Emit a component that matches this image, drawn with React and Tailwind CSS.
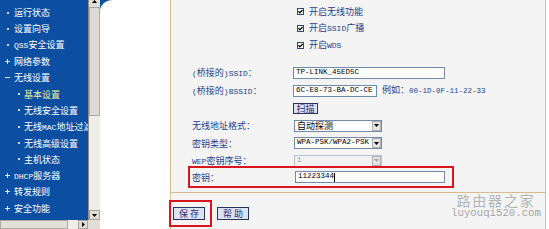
import React from "react";

// SimSun-style half-width latin inside CJK text
function H({ children }) {
  return (
    <span className="font-['Liberation_Mono',monospace] text-[8px]">
      {children}
    </span>
  );
}

// latin text inside input boxes and selects
function M({ children }) {
  return (
    <span className="font-['Liberation_Mono',monospace] text-[7.5px]">
      {children}
    </span>
  );
}

const MENU = [
  { text: "运行状态", mark: "dot" },
  { text: "设置向导", mark: "dot" },
  { text: <><H>QSS</H>安全设置</>, mark: "dot" },
  { text: "网络参数", mark: "plus" },
  { text: "无线设置", mark: "minus" },
  { text: "基本设置", mark: "dot", sub: true, active: true },
  { text: "无线安全设置", mark: "dot", sub: true },
  { text: <>无线<H>MAC</H>地址过滤</>, mark: "dot", sub: true },
  { text: "无线高级设置", mark: "dot", sub: true },
  { text: "主机状态", mark: "dot", sub: true },
  { text: <><H>DHCP</H>服务器</>, mark: "plus" },
  { text: "转发规则", mark: "plus" },
  { text: "安全功能", mark: "plus" },
  { text: "家长控制", mark: "dot" },
];

export default function App() {
  return (
    <div className="relative w-[549px] h-[229px] flex overflow-hidden bg-white font-['Noto_Sans_CJK_SC','Noto_Sans',sans-serif] text-[9px] leading-none">
      <div className="w-[100px] h-full flex flex-col">
        <div className="flex-1 min-h-0 flex">
          <Menu />
          <VScroll />
        </div>
        <HScroll />
      </div>

      <div className="flex-1 bg-[#0c4fa2]">
        <div className="h-full bg-white rounded-tl-[13px_11px] pl-[70px] flex">
          <Panel />
        </div>
      </div>

      <Watermark />
    </div>
  );
}

function Menu() {
  return (
    <nav className="w-[88px] h-full bg-[#0c4fa2] overflow-hidden pt-[4.5px]">
      {MENU.map((m, i) => (
        <div
          key={i}
          className={
            m.sub
              ? "h-[16.3px] flex items-center whitespace-nowrap pl-[16px]"
              : "h-[16.3px] flex items-center whitespace-nowrap pl-[5px]"
          }
        >
          <span className="w-[5px] h-[5px] flex items-center justify-center flex-shrink-0">
            <Mark type={m.mark} />
          </span>
          <span
            className={
              m.sub
                ? m.active
                  ? "ml-[3px] text-[#eef09a]"
                  : "ml-[3px] text-white"
                : "ml-[4px] text-white"
            }
          >
            {m.text}
          </span>
        </div>
      ))}
    </nav>
  );
}

function Mark({ type }) {
  if (type === "plus")
    return (
      <svg width="5" height="5" viewBox="0 0 5 5">
        <rect x="0" y="2" width="5" height="1" fill="#d9e6f7" />
        <rect x="2" y="0" width="1" height="5" fill="#d9e6f7" />
      </svg>
    );
  if (type === "minus")
    return (
      <svg width="5" height="5" viewBox="0 0 5 5">
        <rect x="0" y="2" width="5" height="1" fill="#d9e6f7" />
      </svg>
    );
  return <span className="w-[2px] h-[2px] bg-[#c9ddf5]" />;
}

function VScroll() {
  return (
    <div className="w-[12px] h-full flex flex-col bg-[#efede8] border-l border-[#8f8d86]">
      <div className="h-[8px] bg-[#e1ded6] border-b border-[#a9a69d] flex justify-center">
        <svg width="5" height="3" viewBox="0 0 5 3">
          <path d="M2.5 0L5 3H0Z" fill="#000" />
        </svg>
      </div>
      <div className="h-[108px] bg-[#dedbd3] border-x border-b border-[#aeaba2]" />
      <div className="flex-1" />
      <div className="h-[10px] bg-[#e1ded6] border border-[#a9a69d] flex items-center justify-center">
        <svg width="5" height="3" viewBox="0 0 5 3">
          <path d="M0 0H5L2.5 3Z" fill="#000" />
        </svg>
      </div>
    </div>
  );
}

function HScroll() {
  return (
    <div className="h-[9px] flex bg-[#efede8]">
      <div className="w-[68px] bg-[#e3e0d8] border border-[#aeaba2]" />
      <div className="w-[10px]" />
      <div className="w-[10px] bg-[#e1ded6] border border-[#a9a69d] flex items-center justify-center">
        <svg width="3" height="5" viewBox="0 0 3 5">
          <path d="M0 0L3 2.5L0 5Z" fill="#000" />
        </svg>
      </div>
      <div className="w-[12px] bg-[#e1ded6]" />
    </div>
  );
}

function Panel() {
  return (
    <div className="w-[376px] h-full flex flex-col bg-[#f4f4f4] border-x border-[#d8bb8e]">
      <div className="h-[193px] flex flex-col pt-[2.5px] border-b border-[#d8bb8e]">
        <Check>开启无线功能</Check>
        <Check>
          开启<H>SSID</H>广播
        </Check>
        <Check>
          开启<H>WDS</H>
        </Check>

        <div className="mt-[10.75px]" />

        <Row label={<><H>(</H>桥接的<H>)SSID</H>：</>}>
          <TextBox className="w-[152px]">TP-LINK_45ED5C</TextBox>
        </Row>
        <Row label={<><H>(</H>桥接的<H>)BSSID</H>：</>}>
          <TextBox className="w-[84px]">6C-E8-73-BA-DC-CE</TextBox>
          <span className="ml-[5px] text-[#213f90]">
            例如：<M>00-1D-0F-11-22-33</M>
          </span>
        </Row>
        <Row label="">
          <button className="w-[25px] h-[11px] flex items-center justify-center bg-[#dde2f3] border border-[#28335f] text-[#1d2d78]">
            扫描
          </button>
        </Row>
        <Row label="无线地址格式：">
          <Select>自动探测</Select>
        </Row>
        <Row label="密钥类型：">
          <Select>
            <M>WPA-PSK/WPA2-PSK</M>
          </Select>
        </Row>
        <Row label={<><H>WEP</H>密钥序号：</>}>
          <Select disabled>
            <M>1</M>
          </Select>
        </Row>

        <div className="-mt-[3.25px] ml-[17px] w-[266px] h-[22px] flex items-center pl-[2px] border-2 border-[#d8161e] whitespace-nowrap">
          <div className="w-[101px] text-[#213f90]">密钥：</div>
          <div className="ml-[2px] w-[150px] h-[12px] flex items-center pl-[2px] bg-white border border-[#6f8aab]">
            <M>11223344</M>
            <span className="w-[1px] h-[9px] bg-black" />
          </div>
        </div>
      </div>

      <div className="flex items-center pt-[7px]">
        <div className="-ml-[2px] w-[43px] h-[27px] flex items-center pl-[2px] border-2 border-[#d8161e]">
          <FormButton>保 存</FormButton>
        </div>
        <div className="ml-[5px]">
          <FormButton>帮 助</FormButton>
        </div>
      </div>
    </div>
  );
}

function Check({ children }) {
  return (
    <div className="h-[17px] flex items-center pl-[126px] whitespace-nowrap">
      <span className="w-[7px] h-[7px] flex items-center justify-center bg-white border border-[#2b4e78]">
        <svg width="5" height="5" viewBox="0 0 5 5">
          <path
            d="M0.4 2.3L1.9 3.9L4.6 0.9"
            fill="none"
            stroke="#000"
            strokeWidth="1.3"
          />
        </svg>
      </span>
      <span className="ml-[5px] text-[#213f90]">{children}</span>
    </div>
  );
}

function Row({ label, children }) {
  return (
    <div className="h-[17.5px] flex items-center pl-[21px] whitespace-nowrap">
      <div className="w-[101px] text-[#213f90]">{label}</div>
      {children}
    </div>
  );
}

function TextBox({ className, children }) {
  return (
    <div
      className={
        "h-[12px] flex items-center pl-[2px] bg-white border border-[#6f8aab] overflow-hidden whitespace-nowrap text-black " +
        className
      }
    >
      <M>{children}</M>
    </div>
  );
}

function Select({ children, disabled }) {
  return (
    <div
      className={
        disabled
          ? "ml-[1px] w-[88px] h-[12px] flex items-center bg-[#f1f1f1] border border-[#b9c4d0] text-[#a3a3a3]"
          : "ml-[1px] w-[88px] h-[12px] flex items-center bg-white border border-[#6f8aab] text-black"
      }
    >
      <div className="flex-1 h-full flex items-center pl-[2px] overflow-hidden whitespace-nowrap">
        {children}
      </div>
      <div className="w-[9px] h-[10px] flex items-center justify-center bg-[#e4e4e4] border border-[#b0b0b0]">
        <svg width="5" height="3" viewBox="0 0 5 3">
          <path d="M0 0H5L2.5 3Z" fill={disabled ? "#a8a8a8" : "#000"} />
        </svg>
      </div>
    </div>
  );
}

function FormButton({ children }) {
  return (
    <button className="w-[32px] h-[13px] flex items-center justify-center bg-[#dde2f3] border border-[#28335f] text-[#1d2d78] whitespace-pre">
      {children}
    </button>
  );
}

function Watermark() {
  return (
    <div className="absolute left-[450px] top-[192.5px] w-[92px] flex flex-col items-center pointer-events-none">
      <div className="text-[14px] tracking-[1.8px] text-[#b4b4b4]">路由器之家</div>
      <div className="mt-[1.5px] font-['Liberation_Mono',monospace] text-[10.7px] text-[#a4a4a4]">
        luyouqi520.com
      </div>
    </div>
  );
}
